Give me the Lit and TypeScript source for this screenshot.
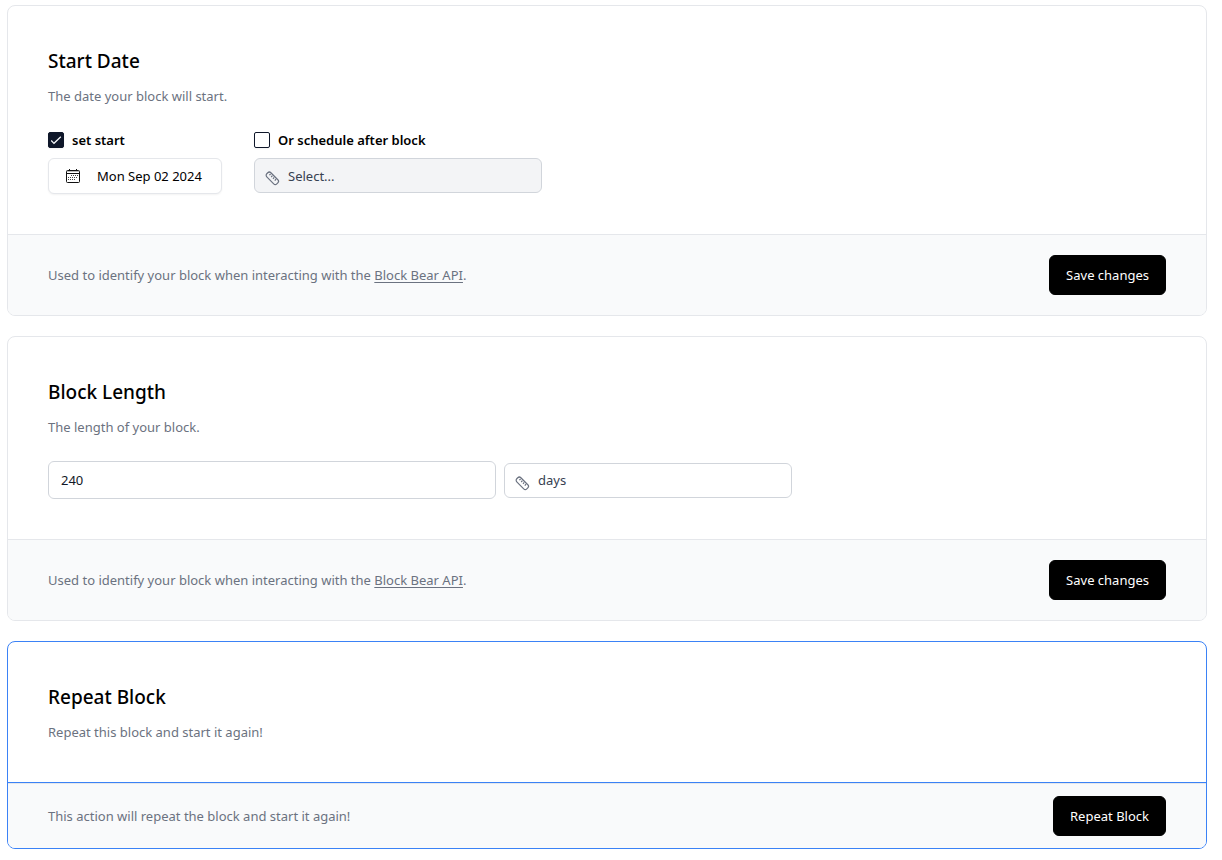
import { LitElement, html, css } from "lit";
import { customElement, property } from "lit/decorators.js";
import { classMap } from "lit/directives/class-map.js";

const controlStyles = css`
  * {
    box-sizing: border-box;
  }
  button,
  input,
  select {
    font-family: inherit;
    font-size: 13px;
    margin: 0;
  }
`;

@customElement("settings-card")
export class SettingsCard extends LitElement {
  @property() heading = "";
  @property() description = "";
  @property() action = "";
  @property({ type: Boolean }) accent = false;

  static styles = [
    controlStyles,
    css`
      :host {
        display: block;
      }
      .card {
        border: 1px solid #e5e7eb;
        border-radius: 8px;
        background: #fff;
        overflow: hidden;
      }
      .body {
        padding: 40px;
      }
      .title {
        margin: 0 0 10px;
        font-size: 19px;
        line-height: 30px;
        font-weight: 500;
      }
      .description,
      .note {
        margin: 0;
        font-size: 13px;
        line-height: 20px;
        color: #6b7280;
      }
      .footer {
        display: flex;
        align-items: center;
        justify-content: space-between;
        gap: 16px;
        padding: 20px 40px;
        border-top: 1px solid #e5e7eb;
        background: #f9fafb;
      }
      .accent {
        border-color: #3b82f6;
      }
      .accent .body {
        border-bottom: 1px solid #3b82f6;
      }
      .accent .footer {
        padding: 12px 40px;
      }
      .action {
        height: 40px;
        padding: 0 16px;
        border: 1px solid #000;
        border-radius: 6px;
        background: #000;
        color: #fff;
        white-space: nowrap;
      }
    `,
  ];

  render() {
    return html`
      <section class=${classMap({ card: true, accent: this.accent })}>
        <div class="body">
          <h2 class="title">${this.heading}</h2>
          <p class="description">${this.description}</p>
          <slot></slot>
        </div>
        <footer class="footer">
          <p class="note"><slot name="note"></slot></p>
          <button class="action" type="button">${this.action}</button>
        </footer>
      </section>
    `;
  }
}

const rulerIcon = html`<svg class="ruler" viewBox="0 0 16 16" aria-hidden="true">
  <rect x="1.2" y="5.4" width="14.2" height="5.8" rx="2.2" transform="rotate(45 8.3 8.3)" />
  <path d="M6.6 4 5.4 5.2M8.4 5.6 7.2 7M10.2 7.4 9 8.8M12 9.2 10.8 10.6" />
</svg>`;

@customElement("app-root")
export class AppRoot extends LitElement {
  static styles = [
    controlStyles,
    css`
      :host {
        display: block;
        padding: 5px 15px 11px 7px;
        font-family: "Segoe UI", "Noto Sans", "Open Sans", sans-serif;
        color: #000;
        background: #fff;
      }
      .stack {
        display: flex;
        flex-direction: column;
        gap: 20px;
      }
      .fields {
        display: flex;
        flex-wrap: wrap;
        margin-top: 24px;
      }
      .schedule {
        gap: 32px;
      }
      .length {
        gap: 8px;
        align-items: center;
      }
      .field {
        display: flex;
        flex-direction: column;
        align-items: flex-start;
        gap: 8px;
      }
      .check {
        display: flex;
        align-items: center;
        gap: 8px;
        font-size: 13px;
        line-height: 20px;
        font-weight: 600;
      }
      .box {
        appearance: none;
        width: 16px;
        height: 16px;
        border: 1px solid #0f172a;
        border-radius: 2px;
        background: #fff;
        box-shadow: 0 1px 2px rgba(0, 0, 0, 0.05);
      }
      .box:checked {
        background: #0f172a
          url("data:image/svg+xml,%3Csvg xmlns='http://www.w3.org/2000/svg' viewBox='0 0 14 14' fill='none' stroke='%23f8fafc' stroke-width='1.2'%3E%3Cpath d='M2.2 7.5 5 10.3 11.8 3.8'/%3E%3C/svg%3E")
          center / 14px no-repeat;
      }
      .date {
        display: flex;
        align-items: center;
        gap: 16px;
        min-width: 174px;
        height: 36px;
        padding: 0 16px;
        border: 1px solid #e5e7eb;
        border-radius: 6px;
        background: #fff;
        color: #000;
        box-shadow: 0 1px 2px rgba(0, 0, 0, 0.05);
      }
      .calendar {
        width: 16px;
        height: 16px;
      }
      .picker {
        position: relative;
        width: 288px;
      }
      .select {
        display: block;
        appearance: none;
        width: 100%;
        height: 35px;
        padding: 0 12px 0 33px;
        border: 1px solid #d1d5db;
        border-radius: 6px;
        background: #fff;
        color: #374151;
        opacity: 1;
      }
      .select:disabled {
        background: #f3f4f6;
      }
      .ruler {
        position: absolute;
        left: 10px;
        top: 12px;
        width: 16px;
        height: 16px;
        fill: none;
        stroke: #6b7280;
        stroke-width: 1.2;
        pointer-events: none;
      }
      .number {
        width: 448px;
        max-width: 100%;
        height: 38px;
        padding: 0 12px;
        border: 1px solid #d1d5db;
        border-radius: 6px;
        background: #fff;
        color: #111827;
      }
      .link {
        color: inherit;
        text-underline-offset: 2px;
      }
    `,
  ];

  private note() {
    return html`<span slot="note"
      >Used to identify your block when interacting with the
      <a class="link" href="#api">Block Bear API</a>.</span
    >`;
  }

  render() {
    return html`
      <main class="stack">
        <settings-card
          heading="Start Date"
          description="The date your block will start."
          action="Save changes"
        >
          <div class="fields schedule">
            <div class="field">
              <label class="check"><input class="box" type="checkbox" checked />set start</label>
              <button class="date" type="button">
                <svg class="calendar" viewBox="0 0 16 16" aria-hidden="true">
                  <rect x="1.5" y="2.5" width="13" height="12" rx="1" fill="none" stroke="#111" />
                  <path d="M1.5 5.5h13M4.5 1v3M11.5 1v3" fill="none" stroke="#111" />
                  <path d="M2 3.5h12" fill="none" stroke="#bbb" />
                  <path d="M6 7.5h7M3 9.5h10M3 11.5h8" fill="none" stroke="#444" stroke-dasharray="1 1" />
                </svg>
                Mon Sep 02 2024
              </button>
            </div>
            <div class="field">
              <label class="check"><input class="box" type="checkbox" />Or schedule after block</label>
              <div class="picker">
                <select class="select" aria-label="Schedule after block" disabled>
                  <option>Select...</option>
                </select>
                ${rulerIcon}
              </div>
            </div>
          </div>
          ${this.note()}
        </settings-card>

        <settings-card
          heading="Block Length"
          description="The length of your block."
          action="Save changes"
        >
          <div class="fields length">
            <input class="number" type="text" inputmode="numeric" value="240" aria-label="Block length" />
            <div class="picker">
              <select class="select" aria-label="Length unit">
                <option>days</option>
              </select>
              ${rulerIcon}
            </div>
          </div>
          ${this.note()}
        </settings-card>

        <settings-card
          heading="Repeat Block"
          description="Repeat this block and start it again!"
          action="Repeat Block"
          accent
        >
          <span slot="note">This action will repeat the block and start it again!</span>
        </settings-card>
      </main>
    `;
  }
}
